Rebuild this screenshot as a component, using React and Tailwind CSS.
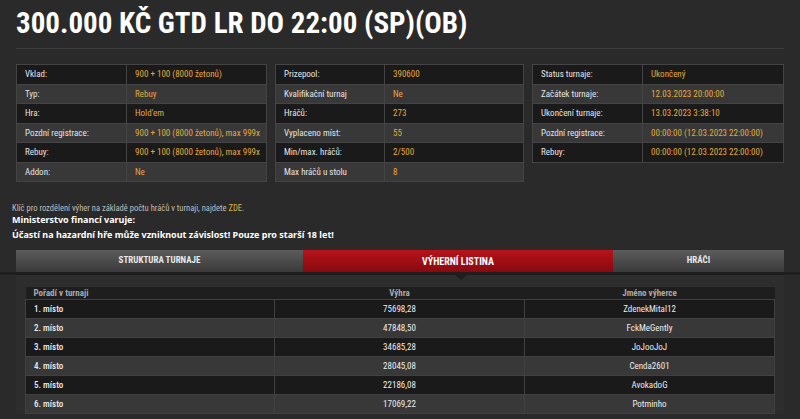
import React from "react"

const cond = {
  fontFamily: '"Roboto Condensed", "DejaVu Sans Condensed", Roboto, sans-serif',
}

const info1 = [
  ["Vklad:", "900 + 100 (8000 žetonů)"],
  ["Typ:", "Rebuy"],
  ["Hra:", "Hold'em"],
  ["Pozdní registrace:", "900 + 100 (8000 žetonů), max 999x"],
  ["Rebuy:", "900 + 100 (8000 žetonů), max 999x"],
  ["Addon:", "Ne"],
]

const info2 = [
  ["Prizepool:", "390600"],
  ["Kvalifikační turnaj", "Ne"],
  ["Hráčů:", "273"],
  ["Vyplaceno míst:", "55"],
  ["Min/max. hráčů:", "2/500"],
  ["Max hráčů u stolu", "8"],
]

const info3 = [
  ["Status turnaje:", "Ukončený"],
  ["Začátek turnaje:", "12.03.2023 20:00:00"],
  ["Ukončení turnaje:", "13.03.2023 3:38:10"],
  ["Pozdní registrace:", "00:00:00 (12.03.2023 22:00:00)"],
  ["Rebuy:", "00:00:00 (12.03.2023 22:00:00)"],
]

const winners = [
  ["1. místo", "75698,28", "ZdenekMital12"],
  ["2. místo", "47848,50", "FckMeGently"],
  ["3. místo", "34685,28", "JoJooJoJ"],
  ["4. místo", "28045,08", "Cenda2601"],
  ["5. místo", "22186,08", "AvokadoG"],
  ["6. místo", "17069,22", "Potminho"],
]

function InfoTable({ rows, labelWidth }) {
  return (
    <table className="w-full table-fixed border-collapse border border-[#444] text-[9px] whitespace-nowrap">
      <tbody>
        {rows.map(([label, value], i) => (
          <tr
            key={label + i}
            className={i % 2 === 0 ? "bg-[#1a1a1a]" : "bg-[#383838]"}
          >
            <td
              className="h-[19.5px] overflow-hidden border border-[#444] px-[8px] leading-[10px] text-[#e4e4e4]"
              style={{ width: labelWidth }}
            >
              {label}
            </td>
            <td className="h-[19.5px] overflow-hidden border border-[#444] px-[8px] leading-[10px] text-[#e2a93a]">
              {value}
            </td>
          </tr>
        ))}
      </tbody>
    </table>
  )
}

export default function App() {
  return (
    <div className="h-[419px] w-[800px] overflow-hidden bg-[#2a2a2a]" style={cond}>
      <div className="px-[16px]">
        <h1 className="pt-[6px] pb-[8px] text-[29px] leading-[34px] font-bold text-white">
          300.000 KČ GTD LR DO 22:00 (SP)(OB)
        </h1>
        <div className="h-px bg-[#3d3d3d]" />
        <div className="mt-[15px] flex items-start gap-[8px]">
          <div className="w-[251px]">
            <InfoTable rows={info1} labelWidth="110px" />
          </div>
          <div className="w-[249px]">
            <InfoTable rows={info2} labelWidth="109px" />
          </div>
          <div className="w-[252px]">
            <InfoTable rows={info3} labelWidth="110px" />
          </div>
        </div>
      </div>

      <p className="mt-[20px] px-[12px] text-[8.5px] leading-[12px] text-[#bdbdbd]">
        Klíč pro rozdělení výher na základě počtu hráčů v turnaji, najdete{" "}
        <span className="text-[#d9b44a]">ZDE</span>.
      </p>
      <div
        className="mt-[-2px] px-[12px] text-[9px] leading-[15px] font-bold text-white"
        style={{ fontFamily: '"Noto Sans", "DejaVu Sans", sans-serif' }}
      >
        <p>Ministerstvo financí varuje:</p>
        <p>Účastí na hazardní hře může vzniknout závislost! Pouze pro starší 18 let!</p>
      </div>

      <div className="mt-[8px] px-[16px]">
        <div className="flex h-[22px] text-[9px] font-bold text-white uppercase">
          <div className="flex w-[287px] items-center justify-center bg-gradient-to-b from-[#5c5c5c] to-[#3a3a3a] text-[#e8e8e8]">
            Struktura turnaje
          </div>
          <div className="flex w-[310px] items-center justify-center bg-gradient-to-b from-[#b8121b] to-[#870a10] text-[10px]">
            Výherní listina
          </div>
          <div className="flex flex-1 items-center justify-center bg-gradient-to-b from-[#5c5c5c] to-[#3a3a3a] text-[#e8e8e8]">
            Hráči
          </div>
        </div>
      </div>
      <div className="relative h-[3px] bg-[#1e1e1e]">
        <div className="absolute top-[3px] left-[455px] h-0 w-0 border-x-[6px] border-t-[5px] border-x-transparent border-t-[#1e1e1e]" />
      </div>

      <div className="mx-[16px] bg-[#2d2d2d] px-[9px] pt-[12px]">
        <table className="w-full border-collapse text-[9px] leading-[10px]">
          <thead>
            <tr className="bg-[#1e1e1e] text-[#a8a8a8]">
              <th className="h-[12px] px-[8px] text-left font-bold">Pořadí v turnaji</th>
              <th className="h-[12px] text-center font-bold">Výhra</th>
              <th className="h-[12px] text-center font-bold">Jméno výherce</th>
            </tr>
          </thead>
          <tbody>
            {winners.map(([place, prize, name], i) => (
              <tr
                key={place}
                className={i % 2 === 0 ? "bg-[#1a1a1a]" : "bg-[#383838]"}
              >
                <td className="h-[19px] w-[249px] border border-[#404040] px-[8px] font-medium text-[#ececec]">
                  {place}
                </td>
                <td className="h-[19px] w-[250px] border border-[#404040] text-center text-[#ececec]">
                  {prize}
                </td>
                <td className="h-[19px] border border-[#404040] text-center text-[#ececec]">
                  {name}
                </td>
              </tr>
            ))}
          </tbody>
        </table>
      </div>
    </div>
  )
}
